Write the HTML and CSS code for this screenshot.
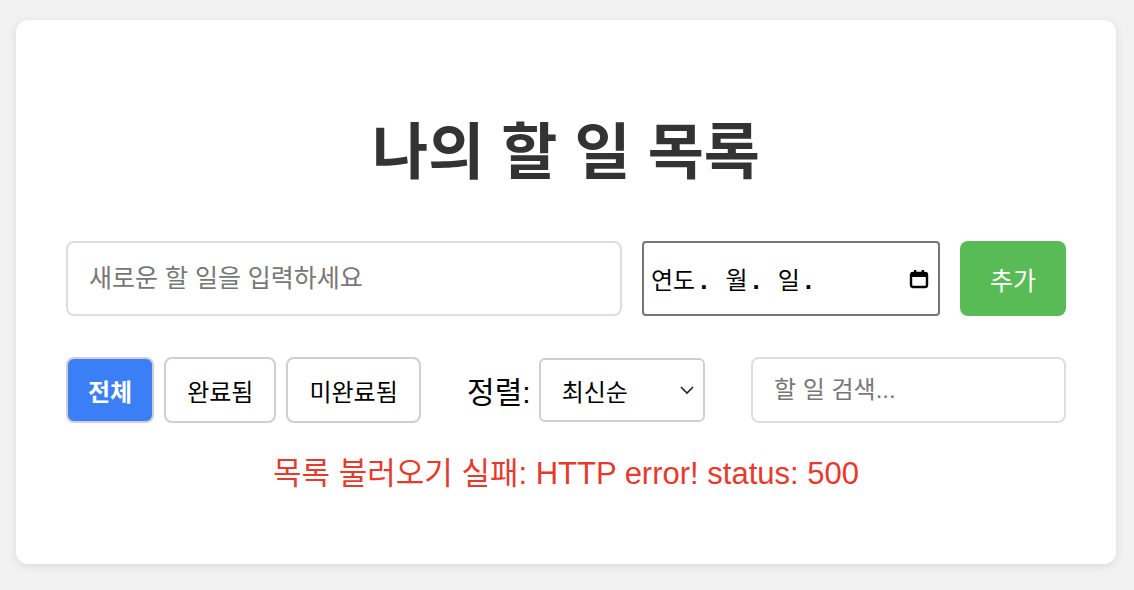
FILE: index.html
```html
<!DOCTYPE html>
<html lang="ko">
<head>
<meta charset="utf-8">
<title>나의 할 일 목록</title>
<link rel="stylesheet" href="styles.css">
</head>
<body>
<main class="card">
  <h1 class="title">나의 할 일 목록</h1>
  <div class="add-row">
    <input class="text-input add-input" type="text" placeholder="새로운 할 일을 입력하세요">
    <div class="date-input">
      <span class="date-text"><span class="seg">연도</span><span class="dot">.</span><span class="seg">월</span><span class="dot">.</span><span class="seg">일</span><span class="dot">.</span></span>
      <svg class="cal-icon" width="22" height="22" viewBox="0 0 22 22" aria-hidden="true">
        <rect x="3" y="5" width="16" height="14" rx="2" fill="none" stroke="#000" stroke-width="2.4"/>
        <rect x="3" y="4" width="16" height="5" fill="#000"/>
        <rect x="6" y="2" width="2.4" height="4" fill="#000"/>
        <rect x="13.6" y="2" width="2.4" height="4" fill="#000"/>
      </svg>
    </div>
    <button class="add-btn">추가</button>
  </div>
  <div class="filter-row">
    <div class="filters">
      <button class="filter-btn active">전체</button>
      <button class="filter-btn">완료됨</button>
      <button class="filter-btn">미완료됨</button>
    </div>
    <div class="sort">
      <span class="sort-label">정렬:</span>
      <div class="select">
        <span>최신순</span>
        <svg class="chev" width="16" height="10" viewBox="0 0 16 10" aria-hidden="true">
          <path d="M2 2 L8 8 L14 2" fill="none" stroke="#222" stroke-width="1.6"/>
        </svg>
      </div>
    </div>
    <input class="text-input search-input" type="text" placeholder="할 일 검색...">
  </div>
  <p class="error">목록 불러오기 실패: HTTP error! status: 500</p>
</main>
</body>
</html>
```
FILE: styles.css
```css
* { box-sizing: border-box; }
html, body { margin: 0; padding: 0; }
body {
  background: #f2f2f2;
  font-family: "Liberation Sans", "Noto Sans CJK KR", sans-serif;
  padding: 20px 18px 26px 16px;
}
.card {
  width: 1100px;
  background: #fff;
  border-radius: 12px;
  box-shadow: 0 2px 10px rgba(0,0,0,0.1);
  padding: 50px;
}
.title {
  margin: 38px 0 53px;
  text-align: center;
  font-family: "Noto Sans CJK KR", sans-serif;
  font-weight: 700;
  font-size: 61px;
  line-height: 80px;
  color: #333;
}
.add-row {
  display: flex;
  gap: 20px;
  height: 75px;
  margin-bottom: 41px;
}
.text-input {
  border: 2px solid #dedede;
  border-radius: 8px;
  font-family: inherit;
  font-size: 25px;
  padding: 0 21px;
  outline: none;
  color: #333;
}
.text-input::placeholder { color: #777; }
.add-input { flex: 0 0 556px; }
.date-input {
  flex: 0 0 298px;
  border: 2px solid #767676;
  border-radius: 4px;
  display: flex;
  align-items: center;
  justify-content: space-between;
  padding: 0 8px 0 7px;
}
.date-text {
  display: flex;
  align-items: baseline;
  font-size: 24px;
  color: #000;
}
.seg { display: inline-block; }
.dot {
  display: inline-block;
  font-weight: 700;
  font-size: 26px;
  margin: 0 18px 0 5px;
}
.add-btn {
  flex: 0 0 106px;
  border: none;
  border-radius: 8px;
  background: #58bb56;
  color: #fff;
  font-family: inherit;
  font-size: 25px;
  padding: 0;
}
.filter-row {
  display: flex;
  justify-content: space-between;
  align-items: center;
  height: 66px;
}
.filters { display: flex; gap: 10px; height: 66px; }
.filter-btn {
  border: 2px solid #cfcfcf;
  border-radius: 8px;
  background: #fff;
  color: #000;
  font-family: inherit;
  font-size: 24px;
  padding: 0 21px;
}
.filter-btn.active {
  background: #3a7ff6;
  color: #fff;
  font-weight: 700;
  padding: 0 20px;
}
.sort { display: flex; align-items: center; gap: 8px; }
.sort-label { font-size: 30px; color: #000; }
.select {
  width: 166px;
  height: 64px;
  border: 2px solid #cfcfcf;
  border-radius: 6px;
  display: flex;
  align-items: center;
  justify-content: space-between;
  padding: 0 8px 0 21px;
  font-size: 24px;
  color: #000;
}
.search-input { width: 315px; height: 66px; font-size: 24px; }
.error {
  margin: 31px 0 20px;
  text-align: center;
  color: #e63a2e;
  font-size: 31px;
  line-height: 40px;
}
```
